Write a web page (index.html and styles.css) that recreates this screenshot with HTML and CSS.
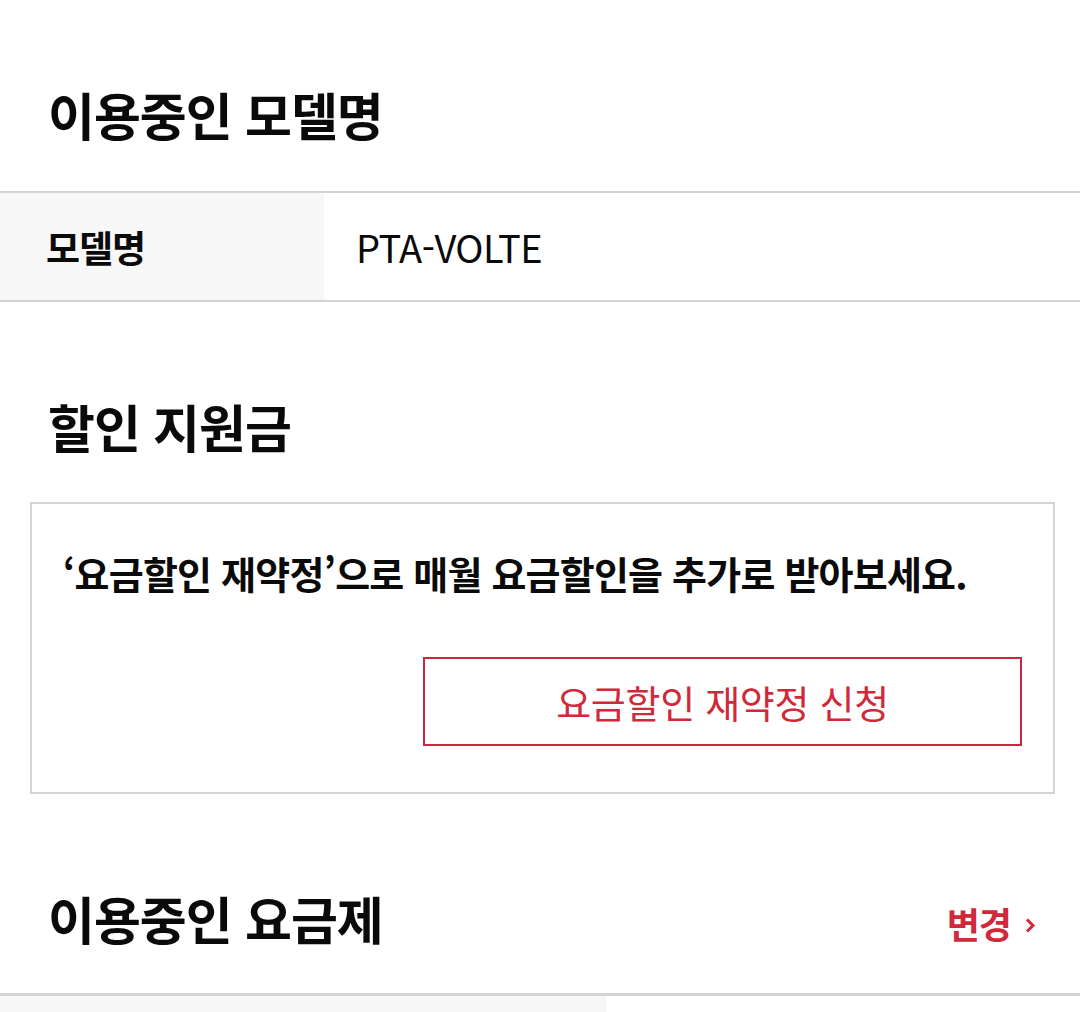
FILE: index.html
```html
<!DOCTYPE html>
<html lang="ko">
<head>
<meta charset="utf-8">
<link rel="stylesheet" href="styles.css">
</head>
<body>
<div class="page">
  <h2 class="title first">이용중인 모델명</h2>
  <div class="table">
    <div class="th">모델명</div>
    <div class="td">PTA-VOLTE</div>
  </div>

  <h2 class="title">할인 지원금</h2>
  <div class="box">
    <p class="box-text">‘요금할인 재약정’으로 매월 요금할인을 추가로 받아보세요.</p>
    <div class="btn-row">
      <a class="btn">요금할인 재약정 신청</a>
    </div>
  </div>

  <div class="title-row">
    <h2 class="title inline">이용중인 요금제</h2>
    <a class="change">변경<svg class="chev" width="13" height="17" viewBox="0 0 13 17"><path d="M4 2.5 L10 8.5 L4 14.5" fill="none" stroke="#d0293a" stroke-width="3"/></svg></a>
  </div>
  <div class="table table2">
    <div class="th wide"></div>
    <div class="td"></div>
  </div>
</div>
</body>
</html>
```
FILE: styles.css
```css
html, body {
  margin: 0;
  padding: 0;
  background: #fff;
}
body {
  font-family: "Noto Sans CJK KR", "Noto Sans", sans-serif;
  color: #0a0a0a;
}
.page {
  width: 1080px;
  height: 1012px;
  overflow: hidden;
}
.title {
  margin: 0;
  padding: 88px 0 40px 48px;
  font-size: 51px;
  font-weight: 700;
  line-height: 72px;
  letter-spacing: -1px;
  color: #0a0a0a;
}
.title.first {
  padding-top: 78px;
  padding-bottom: 41px;
}
.table {
  display: flex;
  border-top: 2px solid #d4d4d4;
  border-bottom: 2px solid #d4d4d4;
  height: 107px;
}
.th {
  width: 324px;
  background: #f7f7f7;
  padding-left: 46px;
  box-sizing: border-box;
  display: flex;
  align-items: center;
  font-size: 37px;
  font-weight: 700;
  letter-spacing: -1px;
}
.td {
  flex: 1;
  padding-left: 32px;
  display: flex;
  align-items: center;
  font-size: 38px;
  font-weight: 400;
  letter-spacing: -0.5px;
}
.box {
  margin: 0 25px 0 30px;
  border: 2px solid #d4d4d4;
  padding: 45px 31px 46px 31px;
}
.box-text {
  margin: 0;
  font-size: 38px;
  font-weight: 700;
  line-height: 48px;
  letter-spacing: -0.8px;
  white-space: nowrap;
}
.btn-row {
  display: flex;
  justify-content: flex-end;
  margin-top: 60px;
}
.btn {
  width: 599px;
  height: 89px;
  box-sizing: border-box;
  border: 2px solid #c8283a;
  display: flex;
  align-items: center;
  justify-content: center;
  font-size: 38px;
  color: #d0293a;
  letter-spacing: -0.3px;
}
.title-row {
  display: flex;
  justify-content: space-between;
  align-items: flex-end;
}
.title.inline {
  padding-bottom: 39px;
}
.change {
  display: flex;
  align-items: center;
  gap: 12px;
  margin: 0 44px 46px 0;
  font-size: 36px;
  font-weight: 700;
  color: #d0293a;
  letter-spacing: -1px;
  line-height: 48px;
}
.chev {
  margin-top: 4px;
}
.table2 {
  border-top-width: 3px;
}
.th.wide {
  width: 606px;
}
```
